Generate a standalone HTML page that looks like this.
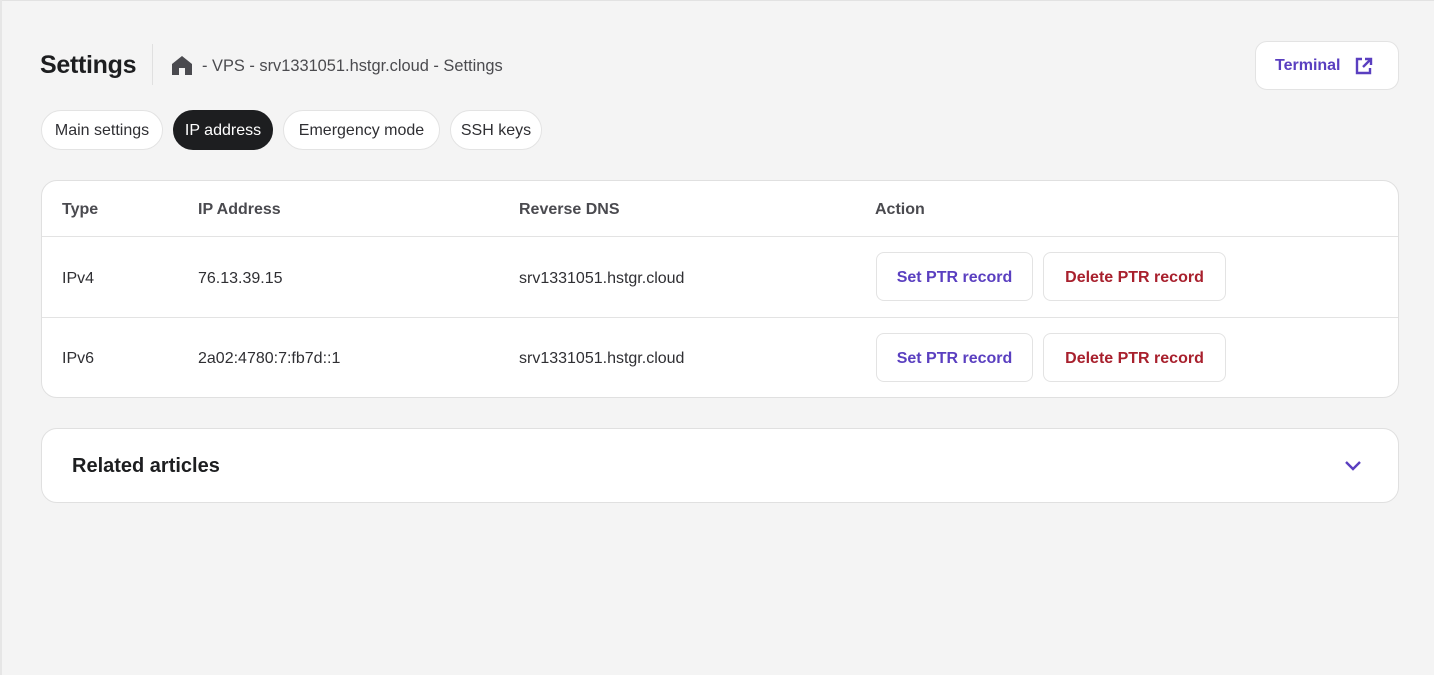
<!DOCTYPE html>
<html><head><meta charset="utf-8"><style>
*{box-sizing:border-box;margin:0;padding:0}
html,body{width:1434px;height:675px;overflow:hidden}
body{background:#f4f4f4;font-family:"Liberation Sans",sans-serif;color:#1d1e20;position:relative}
.edge1{position:absolute;left:0;top:0;width:1434px;height:1px;background:#e2e2e2}
.edge2{position:absolute;left:0;top:0;width:2px;height:675px;background:#e6e6e6}
.abs{position:absolute}
h1{position:absolute;left:40px;top:51px;font-size:25px;font-weight:700;color:#1d1e20;letter-spacing:-0.3px}
.sep{position:absolute;left:152px;top:44px;width:1px;height:41px;background:#e0e0e0}
.crumb{position:absolute;left:202px;top:57px;font-size:16.4px;color:#4b4b4f}
.term{position:absolute;left:1255px;top:41px;width:144px;height:49px;background:#fff;border:1px solid #e3e3e3;border-radius:12px;font-weight:700;font-size:16px;display:flex;align-items:center;padding-left:19px;padding-top:1px;color:#5a3fc0}
.pill{position:absolute;top:110px;height:40px;border-radius:20px;background:#fff;border:1px solid #e3e3e3;font-size:16px;display:flex;align-items:center;justify-content:center;color:#2f2f33;padding-top:1px}
.pill.on{background:#1d1e20;color:#fff;border-color:#1d1e20}
.card{position:absolute;left:41px;width:1358px;background:#fff;border:1px solid #e0e0e0;border-radius:16px}
.th{position:absolute;top:201px;font-size:16px;font-weight:700;color:#4a4a4f}
.td{position:absolute;font-size:16px;color:#2f2f33}
.hl{position:absolute;left:42px;width:1356px;height:1px;background:#e3e3e3}
.btn{position:absolute;height:49px;background:#fff;border:1px solid #e3e3e3;border-radius:8px;font-weight:700;font-size:16px;display:flex;align-items:center;justify-content:center;padding-top:2px}
.set{left:876px;width:157px;color:#5a3fc0}
.del{left:1043px;width:183px;color:#a8202d}
</style></head><body>
<div class="edge1"></div><div class="edge2"></div>
<h1>Settings</h1>
<div class="sep"></div>
<svg class="abs" style="left:172px;top:56px" width="20" height="19" viewBox="0 0 20 19"><path d="M10 0L0 8V19H7V12H13V19H20V8Z" fill="#4a4a4f"/></svg>
<div class="crumb">- VPS - srv1331051.hstgr.cloud - Settings</div>
<div class="term">Terminal<svg style="margin-left:13px" width="19" height="19" viewBox="0 0 19 19" fill="none" stroke="#5a3fc0" stroke-width="2.4"><path d="M8 2H3V16H16V11"/><path d="M11 2H17V8M17 2L9 10"/></svg></div>
<div class="pill" style="left:41px;width:122px">Main settings</div>
<div class="pill on" style="left:173px;width:100px">IP address</div>
<div class="pill" style="left:283px;width:157px">Emergency mode</div>
<div class="pill" style="left:450px;width:92px">SSH keys</div>
<div class="card" style="top:180px;height:218px"></div>
<div class="th" style="left:62px">Type</div>
<div class="th" style="left:198px">IP Address</div>
<div class="th" style="left:519px">Reverse DNS</div>
<div class="th" style="left:875px">Action</div>
<div class="hl" style="top:236px"></div>
<div class="hl" style="top:317px"></div>
<div class="td" style="left:62px;top:270px">IPv4</div>
<div class="td" style="left:198px;top:270px">76.13.39.15</div>
<div class="td" style="left:519px;top:270px">srv1331051.hstgr.cloud</div>
<div class="btn set" style="top:252px">Set PTR record</div>
<div class="btn del" style="top:252px">Delete PTR record</div>
<div class="td" style="left:62px;top:350px">IPv6</div>
<div class="td" style="left:198px;top:350px">2a02:4780:7:fb7d::1</div>
<div class="td" style="left:519px;top:350px">srv1331051.hstgr.cloud</div>
<div class="btn set" style="top:333px">Set PTR record</div>
<div class="btn del" style="top:333px">Delete PTR record</div>
<div class="card" style="top:428px;height:75px"></div>
<div class="abs" style="left:72px;top:455px;font-size:20px;font-weight:700;color:#1d1e20">Related articles</div>
<svg class="abs" style="left:1344px;top:460px" width="18" height="12" viewBox="0 0 18 12" fill="none" stroke="#5a3fc0" stroke-width="2.4"><path d="M2 2L9 9L16 2"/></svg>
</body></html>
